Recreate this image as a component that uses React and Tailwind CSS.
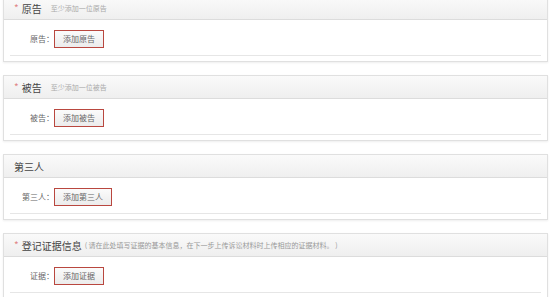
import React from 'react';

const sections = [
  { title: '原告', required: true, hint: '至少添加一位原告', label: '原告', action: '添加原告' },
  { title: '被告', required: true, hint: '至少添加一位被告', label: '被告', action: '添加被告' },
  { title: '第三人', required: false, hint: '', label: '第三人', action: '添加第三人' },
  {
    title: '登记证据信息',
    required: true,
    note: '( 请在此处填写证据的基本信息，在下一步上传诉讼材料时上传相应的证据材料。 )',
    label: '证据',
    action: '添加证据',
  },
];

const Panel = ({ s, first }) => (
  <div className={`shrink-0 bg-white border border-[#e0e0e0] shadow-[0_1px_2px_rgba(0,0,0,0.07)] ${first ? '-mt-[4px]' : ''}`}>
    {/* 标题栏 */}
    <div className="h-[23px] flex items-center pl-[10px] bg-gradient-to-b from-[#fafafa] to-[#efefef] border-b border-[#dcdcdc]">
      {s.required && <span className="text-[#e08585] text-[10px] mr-[3px] leading-none">*</span>}
      <span className="text-[10px] text-[#444]">{s.title}</span>
      {s.hint && <span className="ml-[9px] text-[7px] text-[#aaa]">{s.hint}</span>}
      {s.note && <span className="ml-[3px] text-[7px] text-[#999]">{s.note}</span>}
    </div>
    {/* 内容 */}
    <div className="px-[6px] pt-[10px] pb-[5px]">
      <div className="flex items-center h-[18px]">
        <div className="w-[44px] text-right text-[8px] text-[#666]">{s.label}：</div>
        <button className="h-[18px] px-[8px] border-[1.5px] border-[#b9473f] bg-gradient-to-b from-[#fbfbfb] to-[#ececec] text-[8px] text-[#666] leading-none">
          {s.action}
        </button>
      </div>
      <div className="mt-[7px] border-t border-[#e6e6e6]" />
    </div>
  </div>
);

export default function App() {
  return (
    <div className="w-[551px] h-[297px] overflow-hidden bg-white px-[3px] flex flex-col gap-[13px] font-['Noto_Sans_CJK_SC',sans-serif]">
      {sections.map((s, i) => (
        <Panel key={s.title} s={s} first={i === 0} />
      ))}
    </div>
  );
}
